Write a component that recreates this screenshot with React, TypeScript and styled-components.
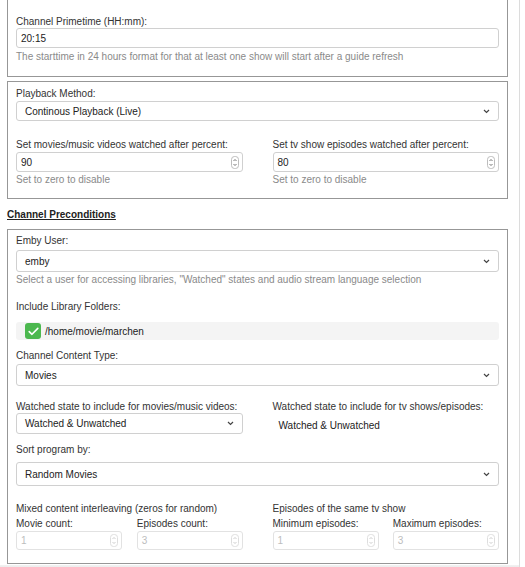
import React from "react";
import styled, { createGlobalStyle } from "styled-components";

const Global = createGlobalStyle`
  html, body { margin: 0; padding: 0; background: #fff; }
  body {
    font-family: "Liberation Sans", Arial, sans-serif;
    font-size: 10px;
    color: #333;
  }
`;

const Page = styled.div`
  display: flex;
  width: 525px;
  height: 567px;
  overflow: hidden;
  background: #fff;
`;

const Main = styled.div`
  width: 501px;
  padding-left: 7px;
  display: flex;
  flex-direction: column;
`;

const Track = styled.div`
  width: 1px;
  margin-left: 11px;
  height: 567px;
  background: #dcdcdc;
`;

const Box = styled.div<{ $noTop?: boolean; $pt: number; $pb: number; $mb?: number }>`
  border: 1px solid #979797;
  ${(p) => (p.$noTop ? "border-top: none;" : "")}
  padding: ${(p) => p.$pt}px 8px ${(p) => p.$pb}px;
  margin-bottom: ${(p) => p.$mb ?? 0}px;
  display: flex;
  flex-direction: column;
`;

const Label = styled.div<{ $mt?: number; $mb?: number }>`
  line-height: 12px;
  height: 12px;
  margin-top: ${(p) => p.$mt ?? 0}px;
  margin-bottom: ${(p) => p.$mb ?? 0}px;
  color: #333;
  white-space: nowrap;
`;

const Help = styled.div<{ $mt?: number }>`
  line-height: 12px;
  margin-top: ${(p) => p.$mt ?? 3}px;
  color: #8a8a8a;
  white-space: nowrap;
`;

const Field = styled.div<{ $h?: number; $disabled?: boolean }>`
  box-sizing: border-box;
  height: ${(p) => p.$h ?? 20}px;
  border: 1px solid ${(p) => (p.$disabled ? "#e2e2e2" : "#d0d0d0")};
  border-radius: 3px;
  padding: 0 3px 0 4px;
  display: flex;
  align-items: center;
  justify-content: space-between;
  color: ${(p) => (p.$disabled ? "#bdbdbd" : "#222")};
  background: #fff;
`;

const SelectField = styled(Field)`
  padding: 0 8px 0 8px;
`;

const Heading = styled.div`
  margin-top: 10px;
  margin-bottom: 8px;
  line-height: 12px;
  font-weight: bold;
  text-decoration: underline;
  color: #222;
`;

const Cols = styled.div<{ $mt?: number; $gap?: number }>`
  display: grid;
  grid-template-columns: 1fr 1fr;
  column-gap: ${(p) => p.$gap ?? 30}px;
  margin-top: ${(p) => p.$mt ?? 0}px;
`;

const Col = styled.div`
  display: flex;
  flex-direction: column;
  min-width: 0;
`;

const FolderRow = styled.div`
  margin-top: 9px;
  height: 18px;
  background: #f4f4f4;
  border-radius: 3px;
  display: flex;
  align-items: center;
  padding-left: 9px;
  gap: 4px;
  color: #222;
`;

const Check = styled.div`
  width: 16px;
  height: 16px;
  border-radius: 3px;
  background: #4cb84f;
  display: flex;
  align-items: center;
  justify-content: center;
`;

const PlainValue = styled.div`
  height: 21px;
  line-height: 21px;
  padding-top: 2px;
  padding-left: 6px;
  color: #222;
`;

const Bottom = styled.div`
  flex: 1;
  margin-top: 1px;
  margin-left: -7px;
  margin-right: -11px;
  background: linear-gradient(#f2f2f2, #ececec);
`;

const Chevron = () => (
  <svg width="7" height="5" viewBox="0 0 7 5">
    <polyline points="1,1 3.5,3.5 6,1" fill="none" stroke="#444" strokeWidth="1.2" />
  </svg>
);

const Spinner = ({ faded }: { faded?: boolean }) => {
  const c = faded ? "#c8c8c8" : "#666";
  return (
    <svg width="8" height="13" viewBox="0 0 8 13">
      <rect x="0.5" y="0.5" width="7" height="12" rx="3" fill="#fff" stroke={faded ? "#dedede" : "#bdbdbd"} />
      <polyline points="2.5,5 4,3.5 5.5,5" fill="none" stroke={c} strokeWidth="0.9" />
      <polyline points="2.5,8 4,9.5 5.5,8" fill="none" stroke={c} strokeWidth="0.9" />
    </svg>
  );
};

const Select = ({ value, h = 22 }: { value: string; h?: number }) => (
  <SelectField $h={h}>
    <span>{value}</span>
    <Chevron />
  </SelectField>
);

const NumberField = ({ value, disabled, h = 20 }: { value: string; disabled?: boolean; h?: number }) => (
  <Field $h={h} $disabled={disabled}>
    <span>{value}</span>
    <Spinner faded={disabled} />
  </Field>
);

export default function App() {
  return (
    <Page>
      <Global />
      <Main>
        <Box $noTop $pt={16} $pb={13} $mb={4}>
          <Label>Channel Primetime (HH:mm):</Label>
          <Field $h={20}>
            <span>20:15</span>
          </Field>
          <Help>The starttime in 24 hours format for that at least one show will start after a guide refresh</Help>
        </Box>

        <Box $pt={6} $pb={12}>
          <Label $mb={1}>Playback Method:</Label>
          <Select value="Continous Playback (Live)" h={20} />
          <Cols $mt={18}>
            <Col>
              <Label $mb={1}>Set movies/music videos watched after percent:</Label>
              <NumberField value="90" />
              <Help $mt={2}>Set to zero to disable</Help>
            </Col>
            <Col>
              <Label $mb={1}>Set tv show episodes watched after percent:</Label>
              <NumberField value="80" />
              <Help $mt={2}>Set to zero to disable</Help>
            </Col>
          </Cols>
        </Box>

        <Heading>Channel Preconditions</Heading>

        <Box $pt={5} $pb={13}>
          <Label $mb={3}>Emby User:</Label>
          <Select value="emby" />
          <Help $mt={2}>Select a user for accessing libraries, "Watched" states and audio stream language selection</Help>

          <Label $mt={15}>Include Library Folders:</Label>
          <FolderRow>
            <Check>
              <svg width="11" height="9" viewBox="0 0 11 9">
                <polyline points="1.2,4.6 4,7.3 9.8,1.4" fill="none" stroke="#fff" strokeWidth="1.6" strokeLinecap="round" strokeLinejoin="round" />
              </svg>
            </Check>
            <span>/home/movie/marchen</span>
          </FolderRow>

          <Label $mt={10} $mb={2}>Channel Content Type:</Label>
          <Select value="Movies" />

          <Cols $mt={15}>
            <Col>
              <Label $mb={0}>Watched state to include for movies/music videos:</Label>
              <Select value="Watched & Unwatched" h={21} />
            </Col>
            <Col>
              <Label>Watched state to include for tv shows/episodes:</Label>
              <PlainValue>Watched &amp; Unwatched</PlainValue>
            </Col>
          </Cols>

          <Label $mt={8} $mb={6}>Sort program by:</Label>
          <Select value="Random Movies" h={24} />

          <Cols $mt={17}>
            <Col>
              <Label>Mixed content interleaving (zeros for random)</Label>
              <Cols $mt={3} $gap={15}>
                <Col>
                  <Label $mb={1}>Movie count:</Label>
                  <NumberField value="1" disabled h={19} />
                </Col>
                <Col>
                  <Label $mb={1}>Episodes count:</Label>
                  <NumberField value="3" disabled h={19} />
                </Col>
              </Cols>
            </Col>
            <Col>
              <Label>Episodes of the same tv show</Label>
              <Cols $mt={3} $gap={14}>
                <Col>
                  <Label $mb={1}>Minimum episodes:</Label>
                  <NumberField value="1" disabled h={19} />
                </Col>
                <Col>
                  <Label $mb={1}>Maximum episodes:</Label>
                  <NumberField value="3" disabled h={19} />
                </Col>
              </Cols>
            </Col>
          </Cols>
        </Box>
        <Bottom />
      </Main>
      <Track />
    </Page>
  );
}
